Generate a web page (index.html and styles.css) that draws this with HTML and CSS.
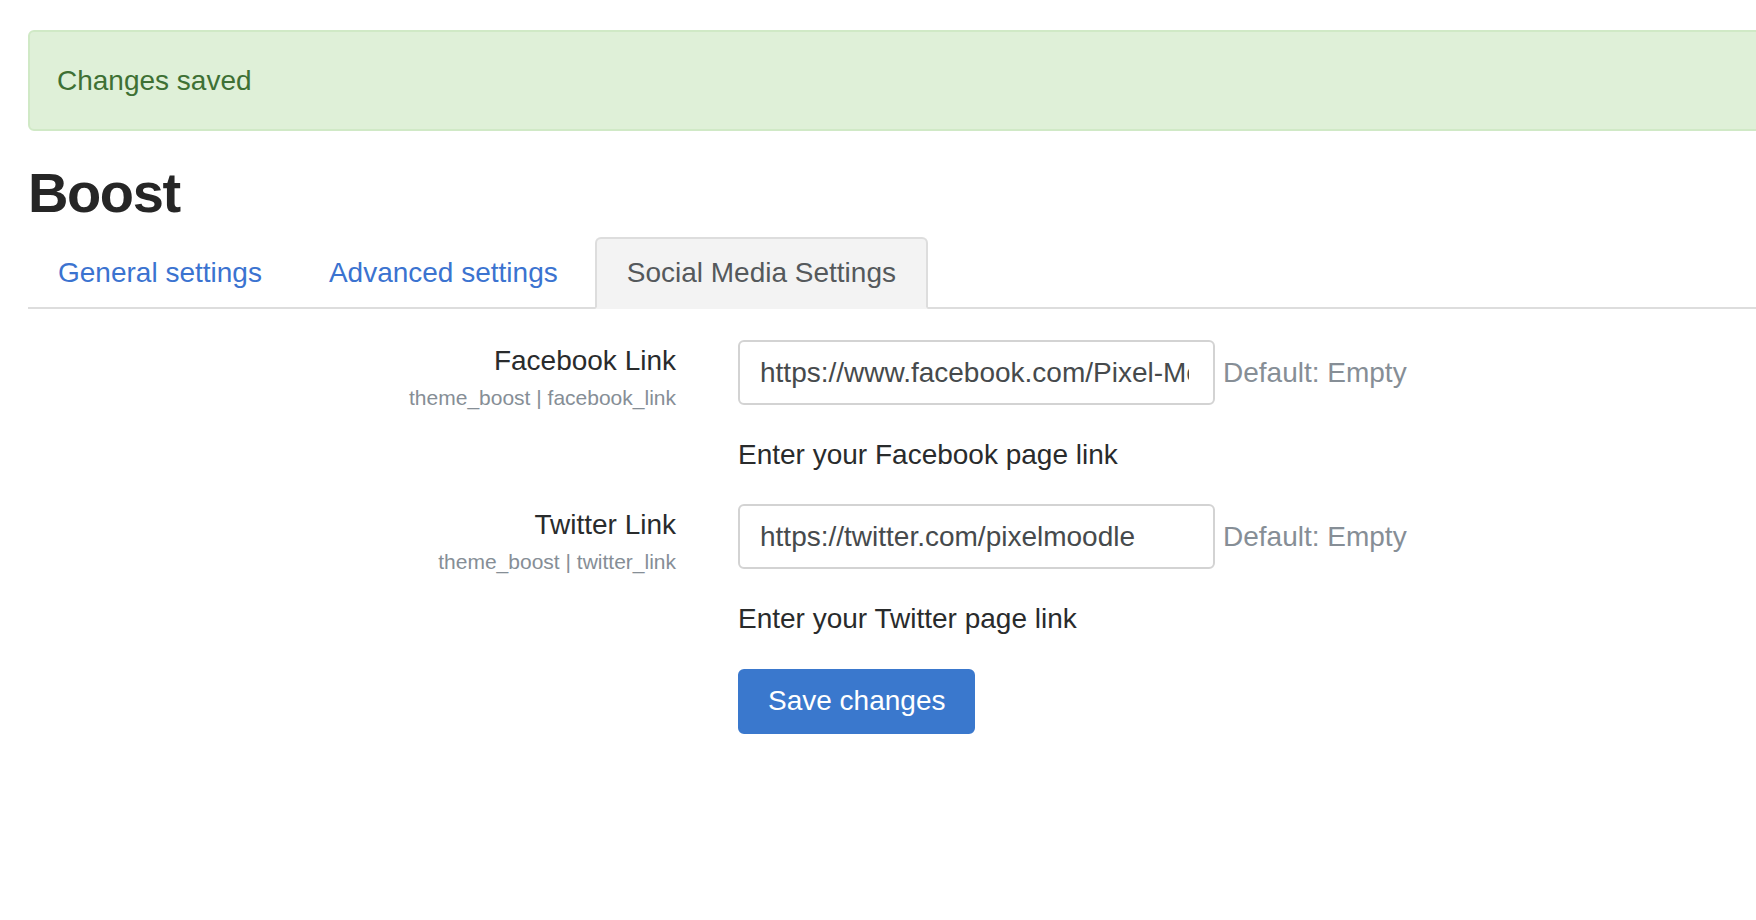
FILE: index.html
```html
<!DOCTYPE html>
<html lang="en">
<head>
<meta charset="utf-8">
<title>Boost settings</title>
<link rel="stylesheet" href="styles.css">
</head>
<body>
<div class="page">
  <div class="alert">Changes saved</div>
  <h2 class="title">Boost</h2>
  <ul class="tabs">
    <li class="tab"><a class="tab-link" href="#">General settings</a></li>
    <li class="tab"><a class="tab-link" href="#">Advanced settings</a></li>
    <li class="tab"><a class="tab-link active" href="#">Social Media Settings</a></li>
  </ul>
  <form class="settings">
    <div class="row">
      <div class="label-col">
        <label class="label" for="fb">Facebook Link</label>
        <div class="setting-name">theme_boost | facebook_link</div>
      </div>
      <div class="field-col">
        <div class="field-line">
          <input class="text-input" id="fb" type="text" value="https://www.facebook.com/Pixel-Moodle">
          <span class="default">Default: Empty</span>
        </div>
        <div class="description">Enter your Facebook page link</div>
      </div>
    </div>
    <div class="row">
      <div class="label-col">
        <label class="label" for="tw">Twitter Link</label>
        <div class="setting-name">theme_boost | twitter_link</div>
      </div>
      <div class="field-col">
        <div class="field-line">
          <input class="text-input" id="tw" type="text" value="https://twitter.com/pixelmoodle">
          <span class="default">Default: Empty</span>
        </div>
        <div class="description">Enter your Twitter page link</div>
      </div>
    </div>
    <div class="row">
      <div class="label-col"></div>
      <div class="field-col">
        <button class="btn" type="button">Save changes</button>
      </div>
    </div>
  </form>
</div>
</body>
</html>
```
FILE: styles.css
```css
html, body {
  margin: 0;
  padding: 0;
  overflow: hidden;
  background: #ffffff;
}
body {
  font-family: "Liberation Sans", Arial, Helvetica, sans-serif;
  font-size: 28px;
  line-height: 42px;
  color: #292b2c;
}
.page {
  width: 1800px;
  padding: 30px 0 0 28px;
}
.alert {
  box-sizing: border-box;
  height: 101px;
  display: flex;
  align-items: center;
  padding: 0 27px;
  background: #dff0d8;
  border: 2px solid #d0e9c6;
  border-radius: 6px;
  color: #3e7034;
}
.title {
  margin: 31px 0 13px 0;
  font-size: 56px;
  line-height: 61.6px;
  font-weight: bold;
  letter-spacing: -1.4px;
  color: #262626;
}
.tabs {
  list-style: none;
  margin: 0;
  padding: 0;
  display: flex;
  border-bottom: 2px solid #dddddd;
}
.tab {
  margin-bottom: -2px;
}
.tab + .tab {
  margin-left: 7px;
}
.tab-link {
  display: block;
  padding: 13px 28px;
  line-height: 42px;
  border: 2px solid transparent;
  border-radius: 6px 6px 0 0;
  color: #3b73d0;
  text-decoration: none;
}
.tab-link.active {
  padding: 13px 30px;
  color: #55595c;
  background: #f3f3f3;
  border-color: #dddddd #dddddd transparent;
}
.settings {
  margin-top: 31px;
}
.row {
  display: grid;
  grid-template-columns: 648px 1fr;
  column-gap: 62px;
  align-items: start;
}
.row + .row {
  margin-top: 28px;
}
.label-col {
  text-align: right;
}
.label {
  display: block;
  line-height: 42px;
  color: #292b2c;
}
.setting-name {
  font-size: 21px;
  line-height: 31px;
  color: #868e96;
}
.field-line {
  display: flex;
  align-items: center;
}
.text-input {
  box-sizing: border-box;
  width: 477px;
  height: 65px;
  margin: 0;
  padding: 2px 24px 0 20px;
  border: 2px solid #d3d3d3;
  border-radius: 6px;
  font-family: "Liberation Sans", Arial, Helvetica, sans-serif;
  font-size: 28px;
  color: #464a4c;
  background: #ffffff;
  outline: none;
}
.default {
  margin-left: 8px;
  color: #868e96;
  line-height: 65px;
}
.description {
  margin-top: 29px;
  line-height: 42px;
  color: #292b2c;
}
.btn {
  box-sizing: border-box;
  height: 65px;
  padding: 0 28px;
  margin-top: 1px;
  border: 2px solid #3a78cd;
  border-radius: 6px;
  background: #3a78cd;
  color: #ffffff;
  font-family: "Liberation Sans", Arial, Helvetica, sans-serif;
  font-size: 28px;
  line-height: 42px;
  cursor: pointer;
}
```
